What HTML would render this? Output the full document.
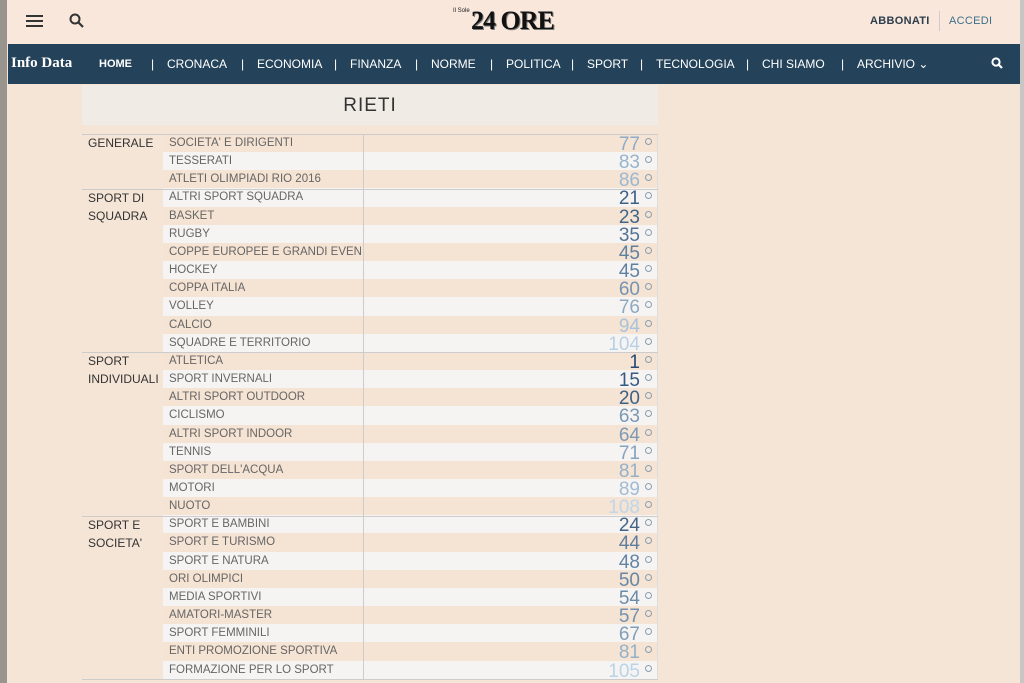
<!DOCTYPE html>
<html><head><meta charset="utf-8"><style>
*{margin:0;padding:0;box-sizing:border-box}
body{width:1024px;height:683px;overflow:hidden;background:#f5e5d6;font-family:"Liberation Sans",sans-serif;position:relative}
.lstrip{position:absolute;left:0;top:0;width:7px;height:683px;background:#9a948e}
.rstrip{position:absolute;right:0;top:0;width:4px;height:683px;background:#c8c6c4}
.hdr{position:absolute;left:7px;top:0;width:1013px;height:44px;background:#f8e7da}
.nav{position:absolute;left:8px;top:44px;width:1012px;height:40px;background:#24435a;color:#fff;font-size:12px}
.nav span{position:absolute;top:13px;white-space:nowrap}
.title{position:absolute;left:82px;top:85px;width:576px;height:40px;background:#f1ebe5;text-align:center;font-size:19px;line-height:42px;color:#333;letter-spacing:1px}
.tbl{position:absolute;left:82px;top:134px;width:576px}
.row{position:relative;height:18.17px;font-size:11.5px;color:#666;letter-spacing:0}
.row .n{position:absolute;left:81px;width:200px;height:100%;padding-left:6px;line-height:18px;white-space:nowrap;overflow:hidden}
.row .v{position:absolute;left:281px;width:295px;height:100%;border-left:1px solid #ccc;border-right:1px solid #ddd}
.row .num{position:absolute;right:17px;top:1px;font-size:19px;line-height:20px}
.row .deg{position:absolute;right:5px;top:4px;width:7px;height:7px;border:1px solid #8a9fb0;border-radius:50%}
.cat{position:absolute;left:6px;font-size:12px;color:#333;line-height:18px}
.sep{position:absolute;left:0;width:576px;border-top:1px solid #ccc}
</style></head><body>
<div class="lstrip"></div><div class="rstrip"></div>
<div class="hdr">
<svg style="position:absolute;left:19px;top:15px" width="17" height="12"><rect y="0" width="17" height="2" fill="#333"/><rect y="5" width="17" height="2" fill="#333"/><rect y="10" width="17" height="2" fill="#333"/></svg>
<svg style="position:absolute;left:62px;top:13px" width="15" height="15"><circle cx="6" cy="6" r="4.5" stroke="#333" stroke-width="2" fill="none"/><line x1="9.5" y1="9.5" x2="14" y2="14" stroke="#333" stroke-width="2.2"/></svg>
<div style="position:absolute;left:446px;top:8px;font-size:6px;color:#222">Il Sole</div>
<div style="position:absolute;left:464px;top:6px;font-family:'Liberation Serif',serif;font-weight:bold;font-size:26px;color:#111;letter-spacing:-1px;text-shadow:1px 1px 0 #777">24 ORE</div>
<div style="position:absolute;left:863px;top:15px;font-size:11px;font-weight:bold;color:#2c3d4d;letter-spacing:.3px">ABBONATI</div>
<div style="position:absolute;left:932px;top:11px;height:20px;border-left:1px solid #ccc"></div>
<div style="position:absolute;left:942px;top:15px;font-size:11px;color:#3d6f8a;letter-spacing:.3px">ACCEDI</div>
</div>
<div class="nav">
<span style="left:3px;top:11px;font-family:'Liberation Serif',serif;font-weight:bold;font-size:15px">Info Data</span>
<span style="left:91px;font-weight:bold;font-size:11px;top:14px">HOME</span>
<span style="left:143px">|</span><span style="left:159px">CRONACA</span>
<span style="left:233px">|</span><span style="left:249px">ECONOMIA</span>
<span style="left:326px">|</span><span style="left:342px">FINANZA</span>
<span style="left:407px">|</span><span style="left:423px">NORME</span>
<span style="left:482px">|</span><span style="left:498px">POLITICA</span>
<span style="left:563px">|</span><span style="left:579px">SPORT</span>
<span style="left:632px">|</span><span style="left:648px">TECNOLOGIA</span>
<span style="left:738px">|</span><span style="left:754px">CHI SIAMO</span>
<span style="left:833px">|</span><span style="left:849px">ARCHIVIO &#8964;</span>
<svg style="position:absolute;left:983px;top:13px" width="12" height="12"><circle cx="5" cy="5" r="3.6" stroke="#fff" stroke-width="2" fill="none"/><line x1="7.5" y1="7.5" x2="11" y2="11" stroke="#fff" stroke-width="2.2"/></svg>
</div>
<div class="title">RIETI</div>
<div class="tbl" id="t"></div>
<script>
var d=[["SOCIETA' E DIRIGENTI",77],["TESSERATI",83],["ATLETI OLIMPIADI RIO 2016",86],
["ALTRI SPORT SQUADRA",21],["BASKET",23],["RUGBY",35],["COPPE EUROPEE E GRANDI EVEN..",45],["HOCKEY",45],["COPPA ITALIA",60],["VOLLEY",76],["CALCIO",94],["SQUADRE E TERRITORIO",104],
["ATLETICA",1],["SPORT INVERNALI",15],["ALTRI SPORT OUTDOOR",20],["CICLISMO",63],["ALTRI SPORT INDOOR",64],["TENNIS",71],["SPORT DELL'ACQUA",81],["MOTORI",89],["NUOTO",108],
["SPORT E BAMBINI",24],["SPORT E TURISMO",44],["SPORT E NATURA",48],["ORI OLIMPICI",50],["MEDIA SPORTIVI",54],["AMATORI-MASTER",57],["SPORT FEMMINILI",67],["ENTI PROMOZIONE SPORTIVA",81],["FORMAZIONE PER LO SPORT",105]];
var h="";
for(var i=0;i<d.length;i++){var t=(d[i][1]-1)/107;t=Math.pow(t,1.1);
var r=Math.round(40+t*150),g=Math.round(75+t*140),b=Math.round(115+t*120);
var bg=i%2==0?"#f5e3d3":"#f6f4f2";
h+='<div class="row"><div class="n" style="background:'+bg+'">'+d[i][0]+'</div><div class="v" style="background:'+bg+'"><span class="num" style="color:rgb('+r+','+g+','+b+')">'+d[i][1]+'</span><span class="deg"></span></div></div>';}
var rh=18.17;
h+='<div class="cat" style="top:0">GENERALE</div><div class="cat" style="top:'+(3*rh)+'px">SPORT DI<br>SQUADRA</div><div class="cat" style="top:'+(12*rh)+'px">SPORT<br>INDIVIDUALI</div><div class="cat" style="top:'+(21*rh)+'px">SPORT E<br>SOCIETA\'</div>';
[0,3,12,21,30].forEach(function(k){h+='<div class="sep" style="top:'+(k*rh)+'px"></div>'});
document.getElementById("t").innerHTML=h;
</script>
</body></html>
